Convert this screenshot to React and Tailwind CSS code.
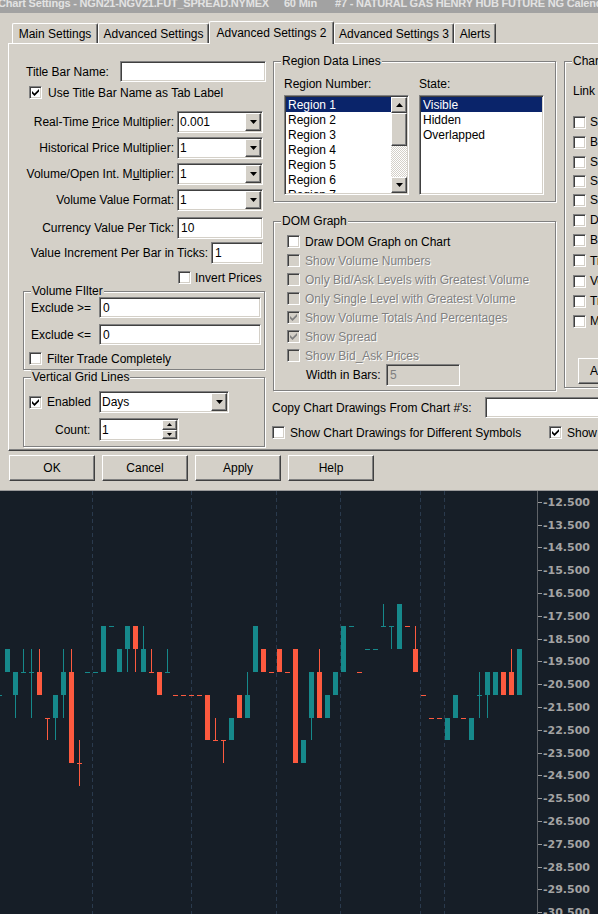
import React from "react";

const sunken =
  "border border-t-[#808080] border-l-[#808080] border-r-white border-b-white shadow-[inset_1px_1px_0_#404040,inset_-1px_-1px_0_#d4d0c8]";
const raised =
  "border border-t-white border-l-white border-r-[#404040] border-b-[#404040] shadow-[inset_-1px_-1px_0_#808080]";
const etched = "border border-[#808080] shadow-[inset_1px_1px_0_#fff,1px_1px_0_#fff]";
const dis = "text-[#808080] [text-shadow:1px_1px_0_#fff]";

const Tick = ({ color }) => (
  <svg width="7" height="7" viewBox="0 0 7 7">
    <path d="M0 2L2.5 4.5L7 0V2.5L2.5 7L0 4.5Z" fill={color} />
  </svg>
);

const Check = ({ checked, disabled }) => (
  <span
    className={`flex h-[13px] w-[13px] shrink-0 items-center justify-center ${sunken} ${
      disabled ? "bg-[#d4d0c8]" : "bg-white"
    }`}
  >
    {checked && <Tick color={disabled ? "#808080" : "#000"} />}
  </span>
);

const Arrow = ({ up, w = 7, h = 4 }) => (
  <svg width={w} height={h} viewBox={`0 0 ${w} ${h}`}>
    <path d={up ? `M${w / 2} 0L${w} ${h}H0Z` : `M0 0H${w}L${w / 2} ${h}Z`} fill="#000" />
  </svg>
);

const Field = ({ value, className = "", disabled }) => (
  <div
    className={`flex shrink-0 items-center pl-[3px] ${sunken} ${
      disabled ? "bg-[#d4d0c8] text-[#808080]" : "bg-white"
    } ${className}`}
  >
    {value}
  </div>
);

const Combo = ({ value, className = "" }) => (
  <div className={`flex h-[22px] shrink-0 items-center bg-white ${sunken} ${className}`}>
    <span className="flex-1 pl-[2px]">{value}</span>
    <span className={`mr-[1px] flex h-[18px] w-[16px] items-center justify-center bg-[#d4d0c8] ${raised}`}>
      <Arrow />
    </span>
  </div>
);

const Spin = ({ value, className = "" }) => (
  <div className={`flex h-[23px] shrink-0 items-center bg-white ${sunken} ${className}`}>
    <span className="flex-1 pl-[2px]">{value}</span>
    <span className="mr-[1px] flex h-[19px] w-[15px] flex-col">
      <span className={`flex flex-1 items-center justify-center bg-[#d4d0c8] ${raised}`}>
        <Arrow up w={5} h={3} />
      </span>
      <span className={`flex flex-1 items-center justify-center bg-[#d4d0c8] ${raised}`}>
        <Arrow w={5} h={3} />
      </span>
    </span>
  </div>
);

const Group = ({ title, className = "", children }) => (
  <fieldset className={`min-w-0 shrink-0 ${etched} ${className}`}>
    <legend className="ml-[7px] bg-[#d4d0c8] px-[1px] leading-[14px]">{title}</legend>
    {children}
  </fieldset>
);

const ListBox = ({ items, scroll }) => (
  <div className={`flex h-[100px] w-[125px] shrink-0 bg-white p-[1px] ${sunken}`}>
    <div className="flex-1 overflow-hidden">
      {items.map((t, i) => (
        <div
          key={t}
          className={`h-[15px] pl-[2px] leading-[16px] ${i === 0 ? "bg-[#0a246a] text-white" : ""}`}
        >
          {t}
        </div>
      ))}
    </div>
    {scroll && (
      <div className="flex w-[16px] flex-col">
        <span className={`flex h-[16px] items-center justify-center bg-[#d4d0c8] ${raised}`}>
          <Arrow up />
        </span>
        <span className={`h-[33px] bg-[#d4d0c8] ${raised}`} />
        <span className="flex-1 bg-[repeating-conic-gradient(#d4d0c8_0_25%,#ffffff_0_50%)] bg-[length:2px_2px]" />
        <span className={`flex h-[16px] items-center justify-center bg-[#d4d0c8] ${raised}`}>
          <Arrow />
        </span>
      </div>
    )}
  </div>
);

const TABS = [
  ["Main Settings", "w-[86px]"],
  ["Advanced Settings", "w-[111px]"],
  ["Advanced Settings 2", "w-[125px]", true],
  ["Advanced Settings 3", "w-[120px]"],
  ["Alerts", "w-[42px]"],
];

const COMBOS = [
  [<>Real-Time <u>P</u>rice Multiplier:</>, "0.001", "mt-[12px]"],
  ["Historical Price Multiplier:", "1", "mt-[4px]"],
  [<>Volume/Open Int. M<u>u</u>ltiplier:</>, "1", "mt-[4px]"],
  ["Volume Value Format:", "1", "mt-[4px]"],
];

const DOM_ROWS = [
  ["Draw DOM Graph on Chart", false, false],
  ["Show Volume Numbers", false, true],
  ["Only Bid/Ask Levels with Greatest Volume", false, true],
  ["Only Single Level with Greatest Volume", false, true],
  ["Show Volume Totals And Percentages", true, true],
  ["Show Spread", true, true],
  ["Show Bid_Ask Prices", false, true],
];

const LINKS = [
  ["Symbol", "h-[20px]"],
  ["Bar Period", "h-[20px]"],
  ["Scale", "h-[20px]"],
  ["Scroll Position", "h-[18px]"],
  ["Session Times", "h-[20px]"],
  ["Days to Load", "h-[20px]"],
  ["Bar Spacing", "h-[20px]"],
  ["Tick Size", "h-[21px]"],
  ["Volume Filter", "h-[20px]"],
  ["Trade Mode", "h-[20px]"],
  ["Market Depth", "h-[20px]"],
];

// [k, colour, bodyTop, bodyBottom, wickTop, wickBottom] in price levels
const CANDLES = [
  [-1, "t", 5, 5], [0, "t", 3, 4], [1, "t", 4, 5, 4, 6], [2, "t", 4, 4, 3, 4],
  [3, "t", 4, 4, 3, 6], [4, "r", 4, 5, 3, 5], [5, "r", 6, 6, 6, 7], [6, "t", 5, 6, 5, 7],
  [7, "t", 4, 5, 3, 6], [8, "r", 4, 8, 3, 8], [9, "r", 8, 8, 7, 9], [10, "t", 4, 4],
  [11, "t", 4, 4], [12, "t", 2, 4], [13, "t", 2, 2], [14, "t", 3, 4],
  [15, "t", 2, 3, 2, 4], [16, "r", 2, 3, 2, 4], [17, "t", 3, 4, 2, 4], [18, "r", 4, 4, 3, 4],
  [19, "r", 4, 5], [20, "t", 4, 4, 3, 4], [21, "r", 5, 5], [22, "r", 5, 5],
  [23, "r", 5, 5], [24, "r", 5, 5], [25, "r", 5, 7], [26, "r", 7, 7, 6, 7],
  [27, "r", 7, 7, 7, 8], [28, "t", 6, 7], [29, "r", 5, 6], [30, "t", 5, 6, 4, 6],
  [31, "t", 2, 4], [32, "r", 3, 4], [33, "r", 4, 4], [34, "r", 3, 4],
  [35, "r", 4, 4], [36, "r", 3, 8], [37, "t", 7, 8], [38, "t", 4, 6, 4, 7],
  [39, "r", 4, 6, 3, 6], [40, "t", 5, 6], [41, "t", 4, 5], [42, "t", 2, 4],
  [43, "t", 2, 2], [44, "r", 4, 4], [45, "t", 3, 3], [46, "t", 3, 3],
  [47, "t", 2, 2, 1, 2], [48, "t", 2, 2, 2, 3], [49, "t", 1, 3], [50, "r", 2, 2],
  [51, "r", 3, 4, 2, 4], [52, "r", 5, 5], [53, "r", 6, 6], [54, "r", 6, 6],
  [55, "t", 6, 7], [56, "t", 5, 6], [57, "r", 6, 6], [58, "t", 6, 7],
  [59, "t", 5, 5, 4, 6], [60, "t", 4, 5, 4, 6], [61, "t", 4, 5], [62, "r", 4, 5],
  [63, "r", 4, 5, 3, 5], [64, "t", 3, 5],
];

const GRID_X = [92.5, 191.5, 276.5, 340.5, 420.5, 444.5];
const lv = (i) => Math.round(10 + (3.5 + i) * 22.8);

const Chart = () => (
  <svg width="598" height="423" viewBox="0 0 598 423" className="block" shapeRendering="crispEdges">
    <rect width="598" height="423" fill="#161e27" />
    {GRID_X.map((x) => (
      <line key={x} x1={x} x2={x} y1="0" y2="423" stroke="#2a3a4d" strokeDasharray="4 3" />
    ))}
    {CANDLES.map(([k, c, bt, bb, wt, wb]) => {
      const fill = c === "t" ? "#16898b" : "#fd5a3f";
      const x = 5 + 8 * k;
      const top = lv(bt);
      const h = Math.max(lv(bb) - top, 1);
      return (
        <g key={k} fill={fill}>
          {wt !== undefined && <rect x={x + 2} y={lv(wt)} width="1" height={lv(wb) - lv(wt)} />}
          <rect x={x} y={top} width="5" height={h} />
        </g>
      );
    })}
    <line x1="537.5" x2="537.5" y1="0" y2="423" stroke="#5f6368" />
    {Array.from({ length: 19 }, (_, n) => {
      const y = Math.round(10.7 + n * 22.8);
      return (
        <g key={n}>
          <line x1="538" x2="542" y1={y + 0.5} y2={y + 0.5} stroke="#9a9a9a" />
          <text
            x="543"
            y={y + 4}
            fill="#a3a3a3"
            fontFamily="DejaVu Sans, sans-serif"
            fontWeight="bold"
            fontSize="11"
            shapeRendering="auto"
          >
            {`-${12 + n}.500`}
          </text>
        </g>
      );
    })}
  </svg>
);

export default function App() {
  return (
    <div className="h-[914px] w-[598px] overflow-hidden bg-[#d4d0c8] text-[12px] leading-[14px] text-black [font-family:'Liberation_Sans',Arial,sans-serif]">
      {/* title bar, cut off at the top */}
      <div className="h-[13px] overflow-hidden whitespace-nowrap bg-[#a2a2a2] text-[#e2e2e2]">
        <div className="ml-[-2px] mt-[-4px] flex text-[11px] font-bold leading-[14px] tracking-[-0.2px]">
          <span>Chart Settings - NGN21-NGV21.FUT_SPREAD.NYMEX</span>
          <span className="ml-[15px]">60 Min</span>
          <span className="ml-[18px]">#7 - NATURAL GAS HENRY HUB FUTURE NG Calendar Spread</span>
        </div>
      </div>

      {/* tabs */}
      <div className="mt-[8px] flex h-[22px] items-end pl-[12px]">
        {TABS.map(([label, w, active]) => (
          <div
            key={label}
            className={`flex items-center justify-center whitespace-nowrap rounded-t-[2px] border-l border-t border-r border-l-white border-t-white border-r-[#404040] bg-[#d4d0c8] shadow-[inset_-1px_0_0_#808080] ${w} ${
              active ? "relative z-10 mb-[-1px] h-[23px]" : "h-[20px]"
            }`}
          >
            {label}
          </div>
        ))}
      </div>

      {/* tab page */}
      <div className="ml-[8px] flex h-[408px] w-[620px] border-b border-l border-t border-b-[#404040] border-l-white border-t-white shadow-[inset_0_-1px_0_#808080]">
        {/* left column */}
        <div className="ml-[14px] flex w-[242px] shrink-0 flex-col">
          <div className="mt-[17px] flex h-[21px] items-center">
            <span className="w-[97px] shrink-0 pl-[3px]">Title Bar Name:</span>
            <Field className="h-[21px] w-[146px]" />
          </div>
          <div className="mt-[4px] flex h-[13px] items-center gap-[6px] pl-[6px]">
            <Check checked />
            <span className="whitespace-nowrap">Use Title Bar Name as Tab Label</span>
          </div>
          {COMBOS.map(([label, value, mt], i) => (
            <div key={i} className={`flex h-[22px] items-center gap-[3px] ${mt}`}>
              <span className="w-[151px] shrink-0 whitespace-nowrap text-right">{label}</span>
              <Combo value={value} className="w-[86px]" />
            </div>
          ))}
          <div className="mt-[6px] flex h-[22px] items-center gap-[3px]">
            <span className="w-[151px] shrink-0 whitespace-nowrap text-right">Currency Value Per Tick:</span>
            <Field value="10" className="h-[22px] w-[86px]" />
          </div>
          <div className="mt-[3px] flex h-[22px] items-center gap-[3px]">
            <span className="w-[185px] shrink-0 whitespace-nowrap text-right">Value Increment Per Bar in Ticks:</span>
            <Field value="1" className="h-[22px] w-[52px]" />
          </div>
          <div className="mt-[7px] flex h-[13px] items-center gap-[4px] pl-[155px]">
            <Check />
            <span className="whitespace-nowrap">Invert Prices</span>
          </div>

          <Group title="Volume FIlter" className="h-[86px] w-[242px]">
            <div className="mt-[-1px] flex flex-col">
              <div className="flex h-[21px] items-center">
                <span className="w-[75px] shrink-0 pl-[7px]">Exclude &gt;=</span>
                <Field value="0" className="h-[21px] w-[162px]" />
              </div>
              <div className="mt-[6px] flex h-[21px] items-center">
                <span className="w-[75px] shrink-0 pl-[7px]">Exclude &lt;=</span>
                <Field value="0" className="h-[21px] w-[162px]" />
              </div>
              <div className="mt-[7px] flex h-[13px] items-center gap-[5px] pl-[5px]">
                <Check />
                <span className="whitespace-nowrap">Filter Trade Completely</span>
              </div>
            </div>
          </Group>

          <Group title="Vertical Grid Lines" className="h-[77px] w-[242px]">
            <div className="flex flex-col">
              <div className="mt-[7px] flex h-[22px] items-center">
                <div className="flex w-[75px] shrink-0 items-center gap-[5px] pl-[5px]">
                  <Check checked />
                  <span>Enabled</span>
                </div>
                <Combo value="Days" className="w-[130px]" />
              </div>
              <div className="mt-[5px] flex h-[23px] items-center">
                <span className="w-[75px] shrink-0 pl-[31px]">Count:</span>
                <Spin value="1" className="w-[80px]" />
              </div>
            </div>
          </Group>
        </div>

        {/* middle column */}
        <div className="ml-[8px] flex w-[283px] shrink-0 flex-col">
          <Group title="Region Data Lines" className="mt-[10px] h-[148px] w-[283px]">
            <div className="mt-[9px] flex h-[14px] items-center pl-[10px]">
              <span className="w-[135px] shrink-0">Region Number:</span>
              <span>State:</span>
            </div>
            <div className="mt-[4px] flex gap-[10px] pl-[10px]">
              <ListBox
                scroll
                items={["Region 1", "Region 2", "Region 3", "Region 4", "Region 5", "Region 6", "Region 7"]}
              />
              <ListBox items={["Visible", "Hidden", "Overlapped"]} />
            </div>
          </Group>

          <Group title="DOM Graph" className="mt-[12px] h-[177px] w-[283px]">
            <div className="mt-[4px] flex flex-col">
              {DOM_ROWS.map(([label, checked, disabled]) => (
                <div key={label} className="flex h-[19px] items-center gap-[5px] pl-[13px]">
                  <Check checked={checked} disabled={disabled} />
                  <span className={`whitespace-nowrap ${disabled ? dis : ""}`}>{label}</span>
                </div>
              ))}
              <div className="mt-[-1px] flex h-[22px] items-center">
                <span className="w-[112px] shrink-0 pl-[32px]">Width in Bars:</span>
                <Field value="5" disabled className="h-[22px] w-[74px]" />
              </div>
            </div>
          </Group>

          <div className="ml-[-1px] mt-[6px] flex h-[21px] items-center">
            <span className="w-[213px] shrink-0 whitespace-nowrap">Copy Chart Drawings From Chart #'s:</span>
            <Field className="h-[21px] w-[150px]" />
          </div>
          <div className="ml-[-1px] mt-[8px] flex h-[13px] items-center">
            <div className="flex w-[277px] shrink-0 items-center gap-[5px]">
              <Check />
              <span className="whitespace-nowrap">Show Chart Drawings for Different Symbols</span>
            </div>
            <div className="flex items-center gap-[5px]">
              <Check checked />
              <span className="whitespace-nowrap">Show Trade Markers</span>
            </div>
          </div>
        </div>

        {/* right column */}
        <div className="ml-[8px] flex w-[200px] shrink-0 flex-col">
          <Group title="Chart Linking" className="mt-[10px] h-[334px] w-[200px]">
            <div className="mt-[16px] flex h-[14px] items-center pl-[8px]">Link Number:</div>
            <div className="mt-[14px] flex flex-col">
              {LINKS.map(([label, h]) => (
                <div key={label} className={`flex items-center gap-[4px] pl-[8px] ${h}`}>
                  <Check />
                  <span className="whitespace-nowrap">{label}</span>
                </div>
              ))}
            </div>
            <div className="mt-[27px] pl-[13px]">
              <div className={`flex h-[26px] w-[100px] items-center pl-[11px] ${raised}`}>Apply to All</div>
            </div>
          </Group>
        </div>
      </div>

      {/* dialog buttons */}
      <div className="mt-[4px] flex gap-[7px] pl-[9px]">
        {["OK", "Cancel", "Apply", "Help"].map((b) => (
          <div key={b} className={`flex h-[26px] w-[86px] items-center justify-center ${raised}`}>
            {b}
          </div>
        ))}
      </div>

      {/* chart */}
      <div className="mt-[9px] border-t border-t-[#9a9a9a]">
        <Chart />
      </div>
    </div>
  );
}
